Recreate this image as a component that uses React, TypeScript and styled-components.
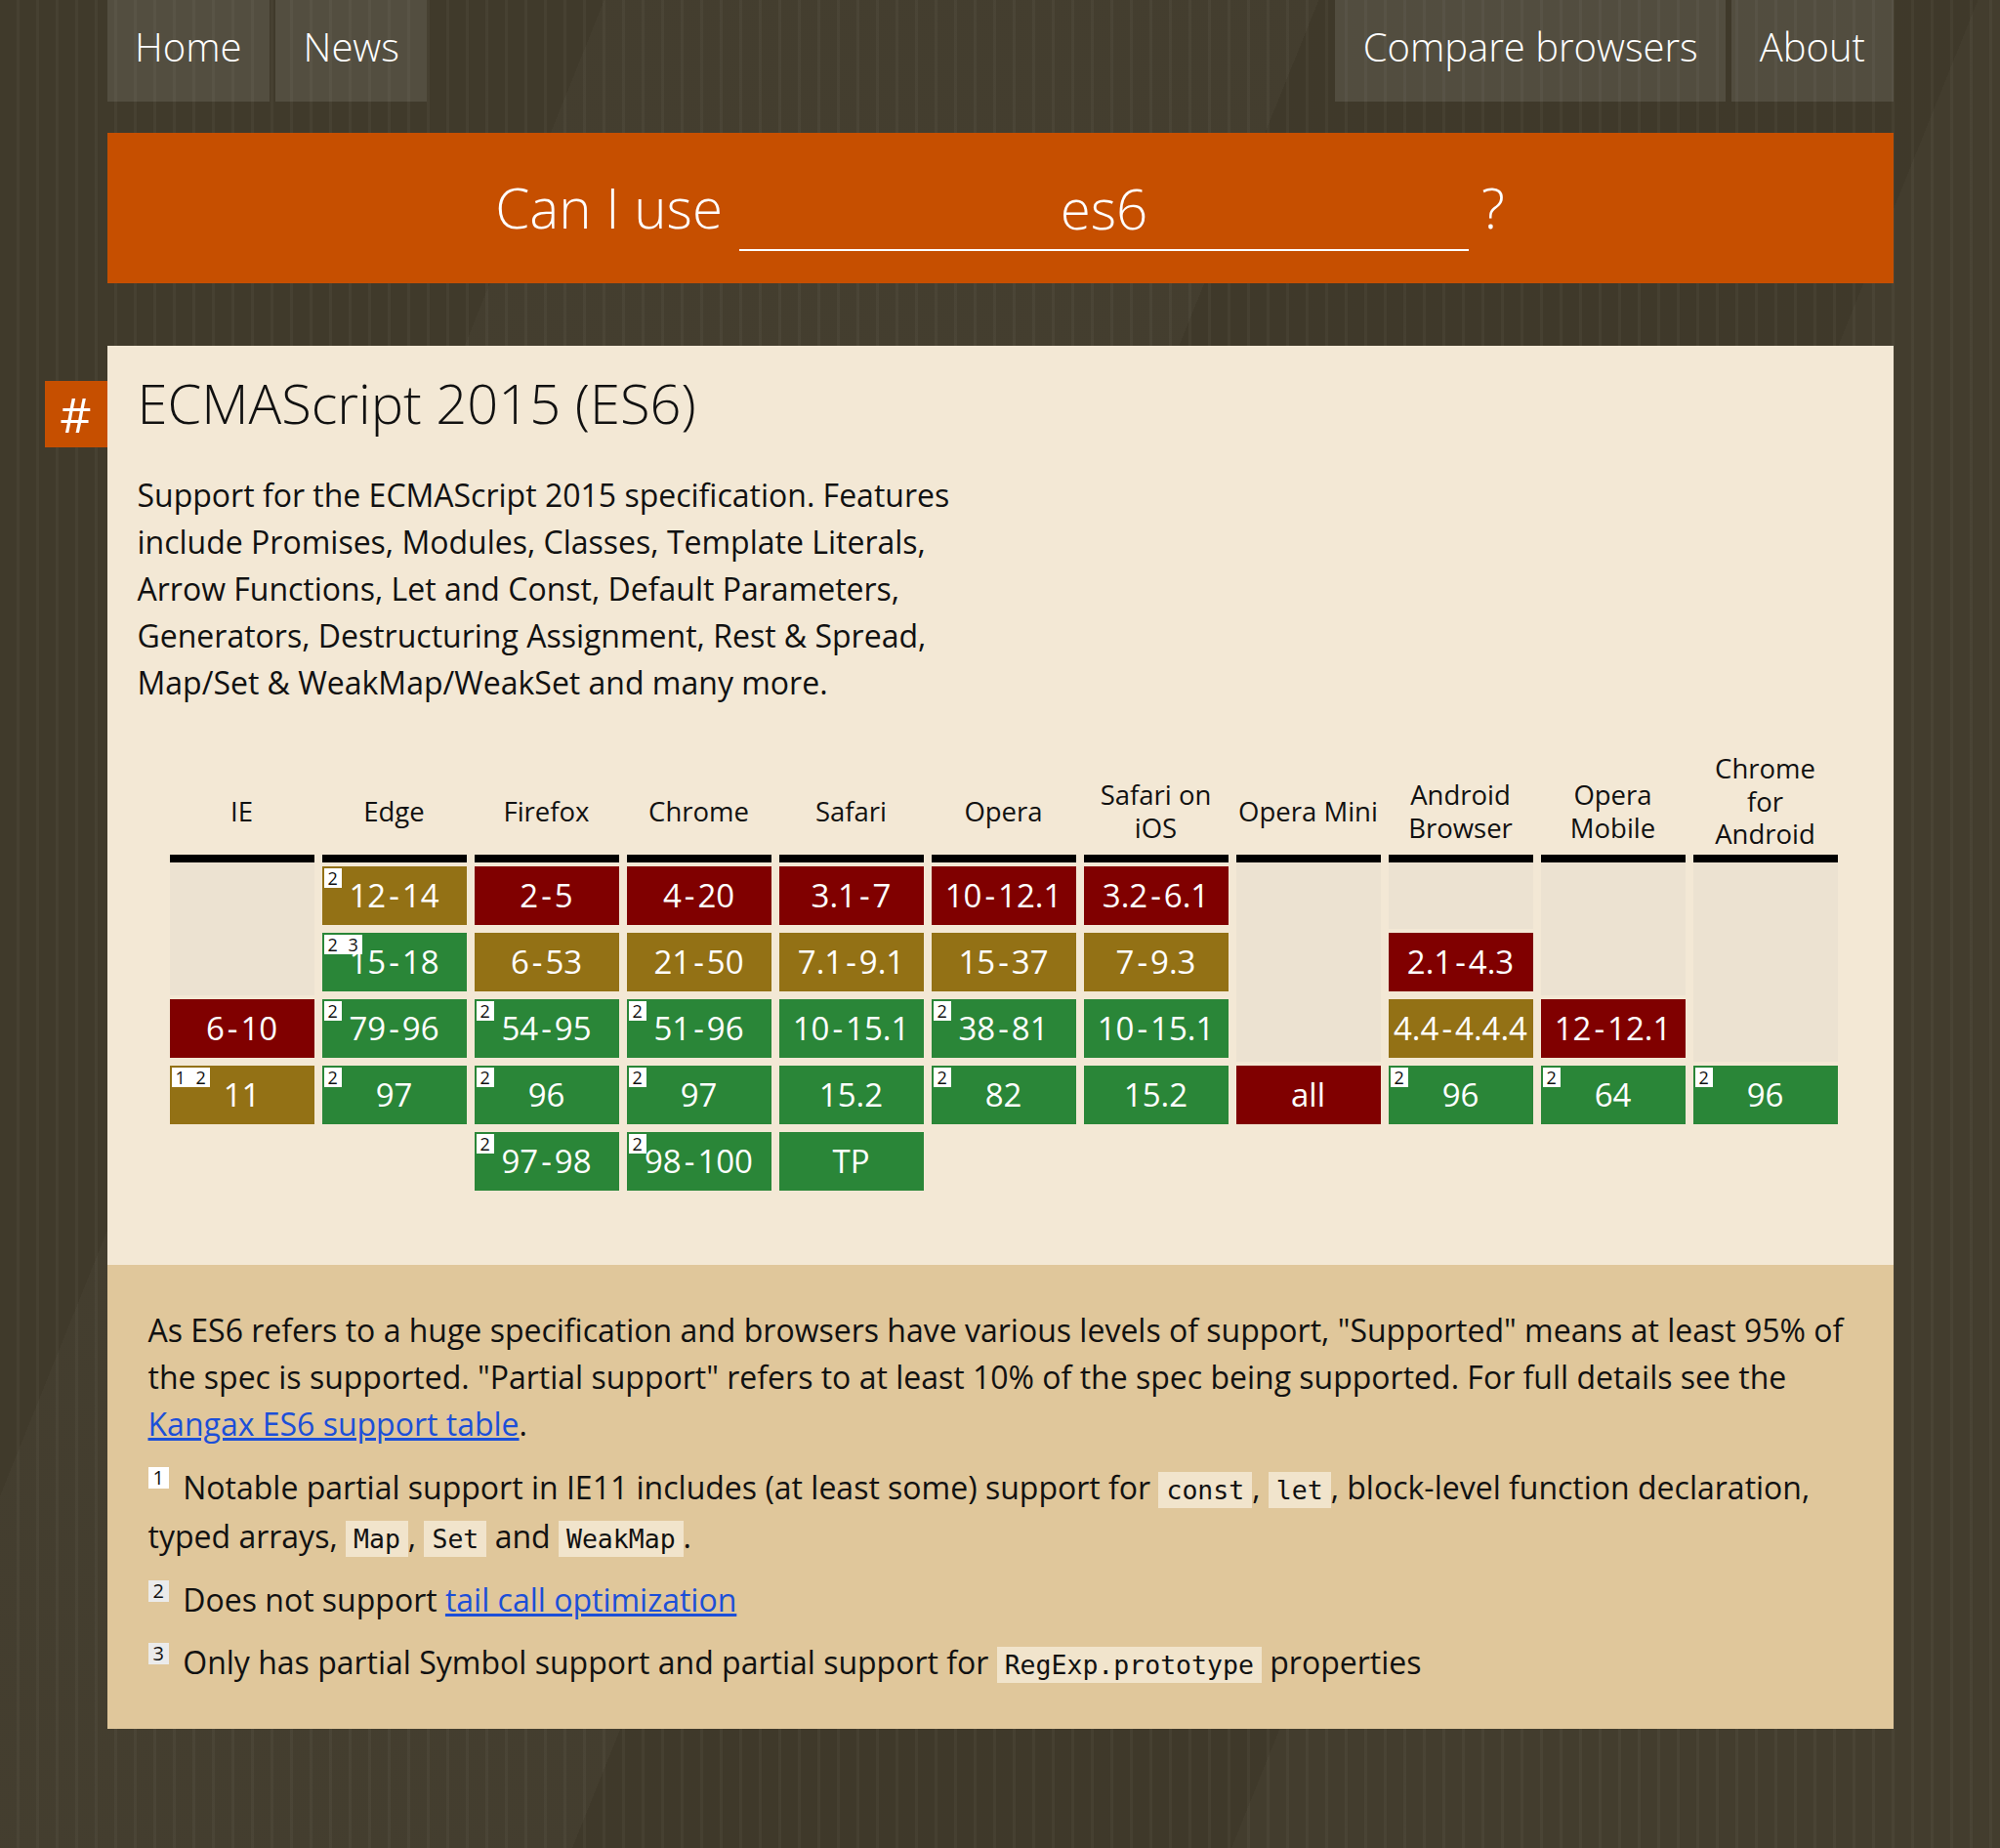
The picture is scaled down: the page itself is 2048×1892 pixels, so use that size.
import React from 'react';
import styled, { createGlobalStyle } from 'styled-components';

type Status = 'n' | 'a' | 'y';
type Slot = { v: string; s: Status; n?: string } | 'empty' | 'blank';
type Browser = { name: Array<string>; slots: Array<Slot> };

const E = 'empty';
const B = 'blank';

const browsers: Array<Browser> = [
	{ name: ['IE'], slots: [E, E, { v: '6-10', s: 'n' }, { v: '11', s: 'a', n: '1 2' }, B] },
	{
		name: ['Edge'],
		slots: [
			{ v: '12-14', s: 'a', n: '2' },
			{ v: '15-18', s: 'y', n: '2 3' },
			{ v: '79-96', s: 'y', n: '2' },
			{ v: '97', s: 'y', n: '2' },
			B,
		],
	},
	{
		name: ['Firefox'],
		slots: [
			{ v: '2-5', s: 'n' },
			{ v: '6-53', s: 'a' },
			{ v: '54-95', s: 'y', n: '2' },
			{ v: '96', s: 'y', n: '2' },
			{ v: '97-98', s: 'y', n: '2' },
		],
	},
	{
		name: ['Chrome'],
		slots: [
			{ v: '4-20', s: 'n' },
			{ v: '21-50', s: 'a' },
			{ v: '51-96', s: 'y', n: '2' },
			{ v: '97', s: 'y', n: '2' },
			{ v: '98-100', s: 'y', n: '2' },
		],
	},
	{
		name: ['Safari'],
		slots: [
			{ v: '3.1-7', s: 'n' },
			{ v: '7.1-9.1', s: 'a' },
			{ v: '10-15.1', s: 'y' },
			{ v: '15.2', s: 'y' },
			{ v: 'TP', s: 'y' },
		],
	},
	{
		name: ['Opera'],
		slots: [
			{ v: '10-12.1', s: 'n' },
			{ v: '15-37', s: 'a' },
			{ v: '38-81', s: 'y', n: '2' },
			{ v: '82', s: 'y', n: '2' },
			B,
		],
	},
	{
		name: ['Safari on', 'iOS'],
		slots: [
			{ v: '3.2-6.1', s: 'n' },
			{ v: '7-9.3', s: 'a' },
			{ v: '10-15.1', s: 'y' },
			{ v: '15.2', s: 'y' },
			B,
		],
	},
	{ name: ['Opera Mini'], slots: [E, E, E, { v: 'all', s: 'n' }, B] },
	{
		name: ['Android', 'Browser'],
		slots: [E, { v: '2.1-4.3', s: 'n' }, { v: '4.4-4.4.4', s: 'a' }, { v: '96', s: 'y', n: '2' }, B],
	},
	{
		name: ['Opera', 'Mobile'],
		slots: [E, E, { v: '12-12.1', s: 'n' }, { v: '64', s: 'y', n: '2' }, B],
	},
	{
		name: ['Chrome', 'for', 'Android'],
		slots: [E, E, E, { v: '96', s: 'y', n: '2' }, B],
	},
];

const statusColors: Record<Status, string> = {
	n: '#800000',
	a: '#937115',
	y: '#2a8638',
};

const GlobalStyle = createGlobalStyle`
	html, body {
		margin: 0;
		padding: 0;
	}
	body {
		min-height: 1892px;
		background-color: #403a2b;
		background-image:
			linear-gradient(112deg, rgba(255,255,255,0) 0 22%, rgba(255,255,255,0.018) 22% 48%, rgba(0,0,0,0.02) 48% 72%, rgba(255,255,255,0.015) 72%),
			repeating-linear-gradient(90deg, rgba(255,255,255,0) 0 17px, rgba(255,255,255,0.035) 17px 20px);
		font-family: "Open Sans", "Noto Sans", sans-serif;
		color: #111;
	}
`;

const Page = styled.div`
	width: 1829px;
	margin: 0 auto;
	padding-bottom: 124px;
`;

const Nav = styled.nav`
	display: flex;
	justify-content: space-between;
`;

const NavGroup = styled.div`
	display: flex;
	gap: 6px;
`;

const NavTab = styled.a`
	display: block;
	height: 104px;
	box-sizing: border-box;
	padding: 0 28.5px 8px;
	background: rgba(255, 255, 255, 0.1);
	color: #fff;
	font-size: 40px;
	font-weight: 300;
	line-height: 96px;
	text-decoration: none;
`;

const SearchBar = styled.form`
	margin-top: 32px;
	height: 154px;
	box-sizing: border-box;
	padding-top: 35px;
	background: #c64f00;
	display: flex;
	justify-content: center;
	align-items: flex-start;
	color: #fff;
	font-size: 56.5px;
	font-weight: 300;
	line-height: 84px;
`;

const SearchLabel = styled.label`
	white-space: nowrap;
`;

const SearchInput = styled.input`
	width: 747px;
	height: 86px;
	box-sizing: border-box;
	margin: 0 13px 0 17px;
	padding: 0;
	border: none;
	border-bottom: 2px solid #fff;
	background: transparent;
	color: #fff;
	font: inherit;
	line-height: 84px;
	text-align: center;
	outline: none;
`;

const Card = styled.section`
	position: relative;
	margin-top: 64px;
	background: #f3e8d5;
`;

const Anchor = styled.a`
	position: absolute;
	left: -64px;
	top: 36px;
	width: 64px;
	height: 68px;
	display: flex;
	align-items: center;
	justify-content: center;
	background: #c64f00;
	color: #fff;
	font-size: 50px;
	text-decoration: none;
`;

const Intro = styled.div`
	padding: 26px 31px 72px;
`;

const Title = styled.h1`
	margin: 0;
	font-size: 56px;
	font-weight: 300;
	line-height: 65px;
	color: #111;
`;

const Description = styled.p`
	margin: 38px 0 0;
	max-width: 860px;
	font-size: 32px;
	line-height: 48px;
`;

const SupportTable = styled.div`
	margin: 47px 0 0 33px;
	display: grid;
	grid-template-columns: repeat(11, 148px);
	column-gap: 8px;
`;

const BrowserHeader = styled.div`
	align-self: end;
	min-height: 80px;
	padding-bottom: 4px;
	display: flex;
	flex-direction: column;
	justify-content: center;
	align-items: center;
	font-size: 27.5px;
	line-height: 33.5px;
	white-space: nowrap;
	text-align: center;
`;

const HeaderBar = styled.div`
	height: 8px;
	background: #000;
`;

const SlotStack = styled.ol`
	margin: 0;
	padding: 0;
	list-style: none;
`;

const SlotItem = styled.li<{ $empty?: boolean }>`
	height: 68px;
	box-sizing: border-box;
	padding: 4px 0;
	background: ${(p) => (p.$empty ? '#ece2d1' : 'transparent')};
`;

const StatCell = styled.div<{ $status: Status }>`
	position: relative;
	height: 60px;
	background: ${(p) => statusColors[p.$status]};
	color: #fff;
	font-size: 33px;
	line-height: 60px;
	text-align: center;
	white-space: nowrap;
`;

const RangeDash = styled.span`
	margin: 0 3px;
`;

const CellNote = styled.span`
	position: absolute;
	top: 2px;
	left: 2px;
	padding: 0 4px;
	background: #fff;
	color: #111;
	font-size: 18px;
	line-height: 20px;
	word-spacing: 6px;
`;

const Notes = styled.div`
	padding: 43px 42px 44px;
	background: #e0c79b;
	font-size: 32px;
	line-height: 48px;
`;

const NoteText = styled.p<{ $tall?: boolean }>`
	margin: 0 0 16px;
	line-height: ${(p) => (p.$tall ? '50px' : '48px')};
	&:last-child {
		margin-bottom: 0;
	}
`;

const NoteNumber = styled.span<{ $light?: boolean }>`
	display: inline-block;
	vertical-align: top;
	margin: 4px 6px 0 0;
	padding: 0 5px;
	background: ${(p) => (p.$light ? '#fff' : '#ebebeb')};
	font-size: 20px;
	line-height: 22px;
`;

const Code = styled.code`
	padding: 3px 8px;
	background: #f1e4cc;
	font-family: "DejaVu Sans Mono", "Liberation Mono", monospace;
	font-size: 26.5px;
	line-height: 32px;
	color: #111;
`;

const Link = styled.a`
	color: #1c4fd8;
	text-decoration: underline;
`;

const renderRange = (v: string) => {
	const i = v.indexOf('-');
	if (i < 0) return v;
	return (
		<>
			{v.slice(0, i)}
			<RangeDash>-</RangeDash>
			{v.slice(i + 1)}
		</>
	);
};

const App = () => {
	return (
		<>
			<GlobalStyle />
			<Page>
				<Nav>
					<NavGroup>
						<NavTab href="#">Home</NavTab>
						<NavTab href="#">News</NavTab>
					</NavGroup>
					<NavGroup>
						<NavTab href="#">Compare browsers</NavTab>
						<NavTab href="#">About</NavTab>
					</NavGroup>
				</Nav>

				<SearchBar onSubmit={(e) => e.preventDefault()}>
					<SearchLabel htmlFor="search">Can I use</SearchLabel>
					<SearchInput id="search" defaultValue="es6" />
					<span>?</span>
				</SearchBar>

				<Card>
					<Anchor href="#">#</Anchor>
					<Intro>
						<Title>ECMAScript 2015 (ES6)</Title>
						<Description>
							Support for the ECMAScript 2015 specification. Features include Promises, Modules,
							Classes, Template Literals, Arrow Functions, Let and Const, Default Parameters,
							Generators, Destructuring Assignment, Rest &amp; Spread, Map/Set &amp;
							WeakMap/WeakSet and many more.
						</Description>

						<SupportTable>
							{browsers.map((b) => (
								<BrowserHeader key={'h' + b.name.join()}>
									{b.name.map((line) => (
										<span key={line}>{line}</span>
									))}
								</BrowserHeader>
							))}
							{browsers.map((b) => (
								<HeaderBar key={'b' + b.name.join()} />
							))}
							{browsers.map((b) => (
								<SlotStack key={'s' + b.name.join()}>
									{b.slots.map((slot, i) => {
										if (slot === 'empty') return <SlotItem key={i} $empty />;
										if (slot === 'blank') return <SlotItem key={i} />;
										return (
											<SlotItem key={i}>
												<StatCell $status={slot.s}>
													{slot.n && <CellNote>{slot.n}</CellNote>}
													{renderRange(slot.v)}
												</StatCell>
											</SlotItem>
										);
									})}
								</SlotStack>
							))}
						</SupportTable>
					</Intro>

					<Notes>
						<NoteText>
							As ES6 refers to a huge specification and browsers have various levels of support,
							"Supported" means at least 95% of the spec is supported. "Partial support" refers to
							at least 10% of the spec being supported. For full details see the{' '}
							<Link href="#">Kangax ES6 support table</Link>.
						</NoteText>
						<NoteText $tall>
							<NoteNumber $light>1</NoteNumber> Notable partial support in IE11 includes (at least
							some) support for <Code>const</Code>, <Code>let</Code>, block-level function
							declaration, typed arrays, <Code>Map</Code>, <Code>Set</Code> and{' '}
							<Code>WeakMap</Code>.
						</NoteText>
						<NoteText>
							<NoteNumber>2</NoteNumber> Does not support <Link href="#">tail call optimization</Link>
						</NoteText>
						<NoteText>
							<NoteNumber>3</NoteNumber> Only has partial Symbol support and partial support for{' '}
							<Code>RegExp.prototype</Code> properties
						</NoteText>
					</Notes>
				</Card>
			</Page>
		</>
	);
};

export default App;
